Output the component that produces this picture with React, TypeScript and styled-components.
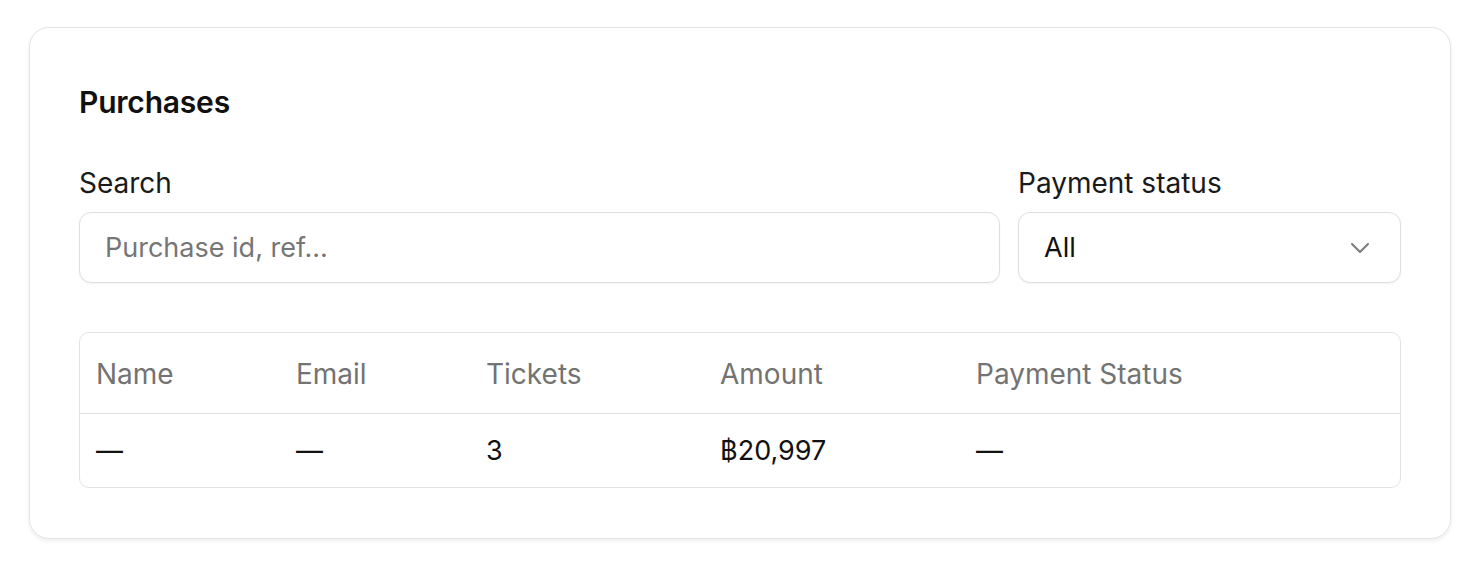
import React from "react";
import styled, { createGlobalStyle } from "styled-components";

const Global = createGlobalStyle`
  html, body { margin: 0; padding: 0; background: #ffffff; }
  body { font-family: Inter, "Noto Sans", "Liberation Sans", sans-serif; color: #111; -webkit-font-smoothing: antialiased; }
  * { box-sizing: border-box; }
`;

const Page = styled.div`
  padding: 27px 29px 28px 29px;
`;

const Card = styled.section`
  border: 1px solid #e4e4e4;
  border-radius: 20px;
  box-shadow: 0 2px 4px rgba(0, 0, 0, 0.07);
  background: #fff;
  padding: 50px 49px 50px 49px;
`;

const Title = styled.h2`
  margin: 0 0 42px 0;
  font-size: 30px;
  line-height: 48px;
  font-weight: 600;
  color: #111;
  letter-spacing: -0.2px;
`;

const Filters = styled.div`
  display: grid;
  grid-template-columns: 1fr 383px;
  column-gap: 18px;
  margin-bottom: 49px;
`;

const Field = styled.label`
  display: flex;
  flex-direction: column;
  gap: 14px;
`;

const LabelText = styled.span`
  font-size: 28px;
  line-height: 30px;
  color: #1a1a1a;
`;

const Control = styled.div`
  height: 71px;
  border: 1px solid #dedede;
  border-radius: 12px;
  box-shadow: 0 1px 2px rgba(0, 0, 0, 0.05);
  display: flex;
  align-items: center;
  justify-content: space-between;
  padding: 0 30px 0 25px;
  font-size: 27px;
  background: #fff;
`;

const Input = styled.input`
  border: none;
  outline: none;
  width: 100%;
  font: inherit;
  font-size: 27px;
  color: #111;
  padding: 0;
  background: transparent;
  &::placeholder { color: #767676; }
`;

const SelectValue = styled.span`
  color: #111;
`;

const TableWrap = styled.div`
  border: 1px solid #e2e2e2;
  border-radius: 10px;
  overflow: hidden;
`;

const Table = styled.table`
  width: 100%;
  border-collapse: collapse;
  table-layout: fixed;
  font-size: 27px;
`;

const Th = styled.th<{ $w?: number }>`
  text-align: left;
  font-weight: 400;
  font-size: 28px;
  color: #737373;
  height: 80px;
  padding: 3px 16px 0 16px;
  border-bottom: 1px solid #e2e2e2;
  width: ${(p) => (p.$w ? `${p.$w}px` : "auto")};
`;

const Td = styled.td`
  height: 74px;
  padding: 0 16px;
  color: #111;
`;

const Chevron = () => (
  <svg width="20" height="12" viewBox="0 0 20 12" fill="none">
    <path d="M2 2l8 8 8-8" stroke="#7a7a7a" strokeWidth="2" strokeLinecap="round" strokeLinejoin="round" />
  </svg>
);

export default function App() {
  return (
    <>
      <Global />
      <Page>
        <Card>
          <Title>Purchases</Title>
          <Filters>
            <Field>
              <LabelText>Search</LabelText>
              <Control>
                <Input placeholder="Purchase id, ref..." />
              </Control>
            </Field>
            <Field>
              <LabelText>Payment status</LabelText>
              <Control>
                <SelectValue>All</SelectValue>
                <Chevron />
              </Control>
            </Field>
          </Filters>
          <TableWrap>
            <Table>
              <thead>
                <tr>
                  <Th $w={200}>Name</Th>
                  <Th $w={190}>Email</Th>
                  <Th $w={234}>Tickets</Th>
                  <Th $w={256}>Amount</Th>
                  <Th>Payment Status</Th>
                </tr>
              </thead>
              <tbody>
                <tr>
                  <Td>—</Td>
                  <Td>—</Td>
                  <Td>3</Td>
                  <Td>฿20,997</Td>
                  <Td>—</Td>
                </tr>
              </tbody>
            </Table>
          </TableWrap>
        </Card>
      </Page>
    </>
  );
}
